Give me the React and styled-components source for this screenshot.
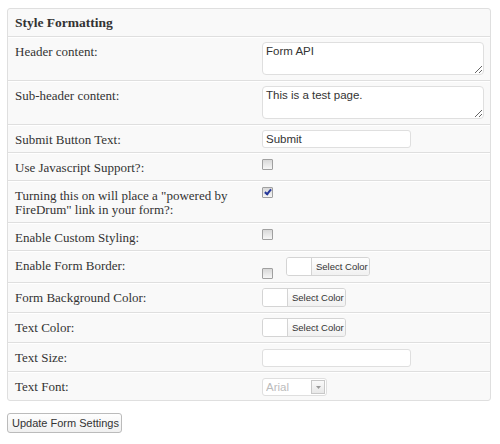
import React from "react";
import styled, { createGlobalStyle } from "styled-components";

const GlobalStyle = createGlobalStyle`
  html, body {
    margin: 0;
    padding: 0;
    background: #fff;
  }
`;

const Page = styled.div`
  padding: 8px 9px 0 7px;
  width: 500px;
  box-sizing: border-box;
`;

const Table = styled.div`
  width: 484px;
  box-sizing: border-box;
  border: 1px solid #dfdfdf;
  border-radius: 3px;
  background: #f9f9f9;
`;

const Header = styled.div`
  padding: 6px 7px 5px;
  line-height: 16px;
  font-family: "Liberation Serif", "DejaVu Serif", serif;
  font-size: 13.5px;
  font-weight: bold;
  color: #333;
  border-bottom: 1px solid #dfdfdf;
`;

const Row = styled.div`
  display: grid;
  grid-template-columns: 247px 1fr;
  border-top: 1px solid #fff;
  border-bottom: 1px solid #dfdfdf;
  &:last-child {
    border-bottom: none;
  }
`;

const Label = styled.div`
  padding: 7px 7px 5px;
  line-height: 14px;
  font-family: "Liberation Serif", "DejaVu Serif", serif;
  font-size: 13px;
  color: #333;
`;

const Field = styled.div`
  padding: ${(p) => p.$pad || "4px 7px 5px"};
  display: flex;
  align-items: flex-start;
`;

const TextArea = styled.textarea`
  display: block;
  box-sizing: border-box;
  width: 222px;
  height: 33px;
  margin: 0;
  padding: 2px 3px;
  border: 1px solid #dfdfdf;
  border-radius: 4px;
  background: #fff;
  font-family: "Liberation Sans", Arial, sans-serif;
  font-size: 11.5px;
  color: #333;
  outline: none;
`;

const TextInput = styled.input`
  box-sizing: border-box;
  width: 149px;
  height: 18px;
  margin: 0;
  padding: 0 3px;
  border: 1px solid #dfdfdf;
  border-radius: 3px;
  background: #fff;
  font-family: "Liberation Sans", Arial, sans-serif;
  font-size: 11.5px;
  color: #333;
  outline: none;
`;

const Check = styled.input.attrs({ type: "checkbox" })`
  appearance: none;
  position: relative;
  box-sizing: border-box;
  width: 11px;
  height: 11px;
  margin: ${(p) => p.$offset || "1px"} 0 0 0;
  border: 1px solid #a0a0a0;
  border-radius: 1px;
  background: linear-gradient(#d8d8d8, #f6f6f6);
  &:checked::after {
    content: "";
    position: absolute;
    left: 3px;
    top: 0px;
    width: 2px;
    height: 5px;
    border-right: 2px solid #26389a;
    border-bottom: 2px solid #26389a;
    transform: rotate(40deg);
  }
`;

const Picker = styled.div`
  display: inline-flex;
  height: 19px;
  margin-left: ${(p) => p.$gap || "0"};
  margin-top: ${(p) => p.$top || "0"};
  border: 1px solid #d4d4d4;
  border-radius: 3px;
  box-sizing: border-box;
  overflow: hidden;
`;

const Swatch = styled.span`
  width: 24px;
  background: #fff;
  border-right: 1px solid #d4d4d4;
`;

const PickButton = styled.button`
  margin: 0;
  padding: 0 4px;
  width: 57px;
  border: none;
  background: linear-gradient(#fefefe, #f1f1f1);
  font-family: "Liberation Sans", Arial, sans-serif;
  font-size: 9.5px;
  color: #333;
  white-space: nowrap;
`;

const SelectBox = styled.div`
  display: inline-flex;
  align-items: center;
  box-sizing: border-box;
  width: 65px;
  height: 18px;
  padding: 0 1px 0 3px;
  border: 1px solid #dfdfdf;
  border-radius: 3px;
  background: #fff;
`;

const Select = styled.select`
  appearance: none;
  flex: 1;
  min-width: 0;
  border: none;
  padding: 0;
  background: transparent;
  font-family: "Liberation Sans", Arial, sans-serif;
  font-size: 11.5px;
  color: #a0a0a0;
  outline: none;
`;

const ArrowBox = styled.span`
  display: flex;
  align-items: center;
  justify-content: center;
  box-sizing: border-box;
  width: 14px;
  height: 14px;
  border: 1px solid #c8c8c8;
  background: linear-gradient(#fafafa, #e8e8e8);
`;

const Submit = styled.button`
  margin-top: 12px;
  height: 20px;
  width: 115px;
  padding: 0 4px;
  border: 1px solid #bbb;
  border-radius: 3px;
  background: linear-gradient(#fefefe, #f0f0f0);
  font-family: "Liberation Sans", Arial, sans-serif;
  font-size: 11px;
  color: #333;
  white-space: nowrap;
`;

const ColorPicker = ({ gap, top }) => (
  <Picker $gap={gap} $top={top}>
    <Swatch />
    <PickButton type="button">Select Color</PickButton>
  </Picker>
);

export default function App() {
  return (
    <>
      <GlobalStyle />
      <Page>
        <Table>
          <Header>Style Formatting</Header>
          <Row>
            <Label>Header content:</Label>
            <Field>
              <TextArea defaultValue="Form API" />
            </Field>
          </Row>
          <Row>
            <Label>Sub-header content:</Label>
            <Field>
              <TextArea defaultValue="This is a test page." />
            </Field>
          </Row>
          <Row>
            <Label>Submit Button Text:</Label>
            <Field $pad="4px 7px 4px">
              <TextInput defaultValue="Submit" />
            </Field>
          </Row>
          <Row>
            <Label>Use Javascript Support?:</Label>
            <Field>
              <Check />
            </Field>
          </Row>
          <Row>
            <Label>
              Turning this on will place a "powered by FireDrum" link in your
              form?:
            </Label>
            <Field>
              <Check defaultChecked />
            </Field>
          </Row>
          <Row>
            <Label>Enable Custom Styling:</Label>
            <Field>
              <Check />
            </Field>
          </Row>
          <Row>
            <Label>Enable Form Border:</Label>
            <Field $pad="4px 7px 3px">
              <Check $offset="12px" />
              <ColorPicker gap="13px" top="1px" />
            </Field>
          </Row>
          <Row>
            <Label>Form Background Color:</Label>
            <Field>
              <ColorPicker />
            </Field>
          </Row>
          <Row>
            <Label>Text Color:</Label>
            <Field>
              <ColorPicker />
            </Field>
          </Row>
          <Row>
            <Label>Text Size:</Label>
            <Field $pad="5px 7px 4px">
              <TextInput />
            </Field>
          </Row>
          <Row>
            <Label>Text Font:</Label>
            <Field $pad="5px 7px 4px">
              <SelectBox>
                <Select disabled defaultValue="Arial">
                  <option>Arial</option>
                </Select>
                <ArrowBox>
                  <svg width="5" height="3" viewBox="0 0 5 3">
                    <path d="M0 0h5L2.5 3z" fill="#999" />
                  </svg>
                </ArrowBox>
              </SelectBox>
            </Field>
          </Row>
        </Table>
        <Submit type="button">Update Form Settings</Submit>
      </Page>
    </>
  );
}
